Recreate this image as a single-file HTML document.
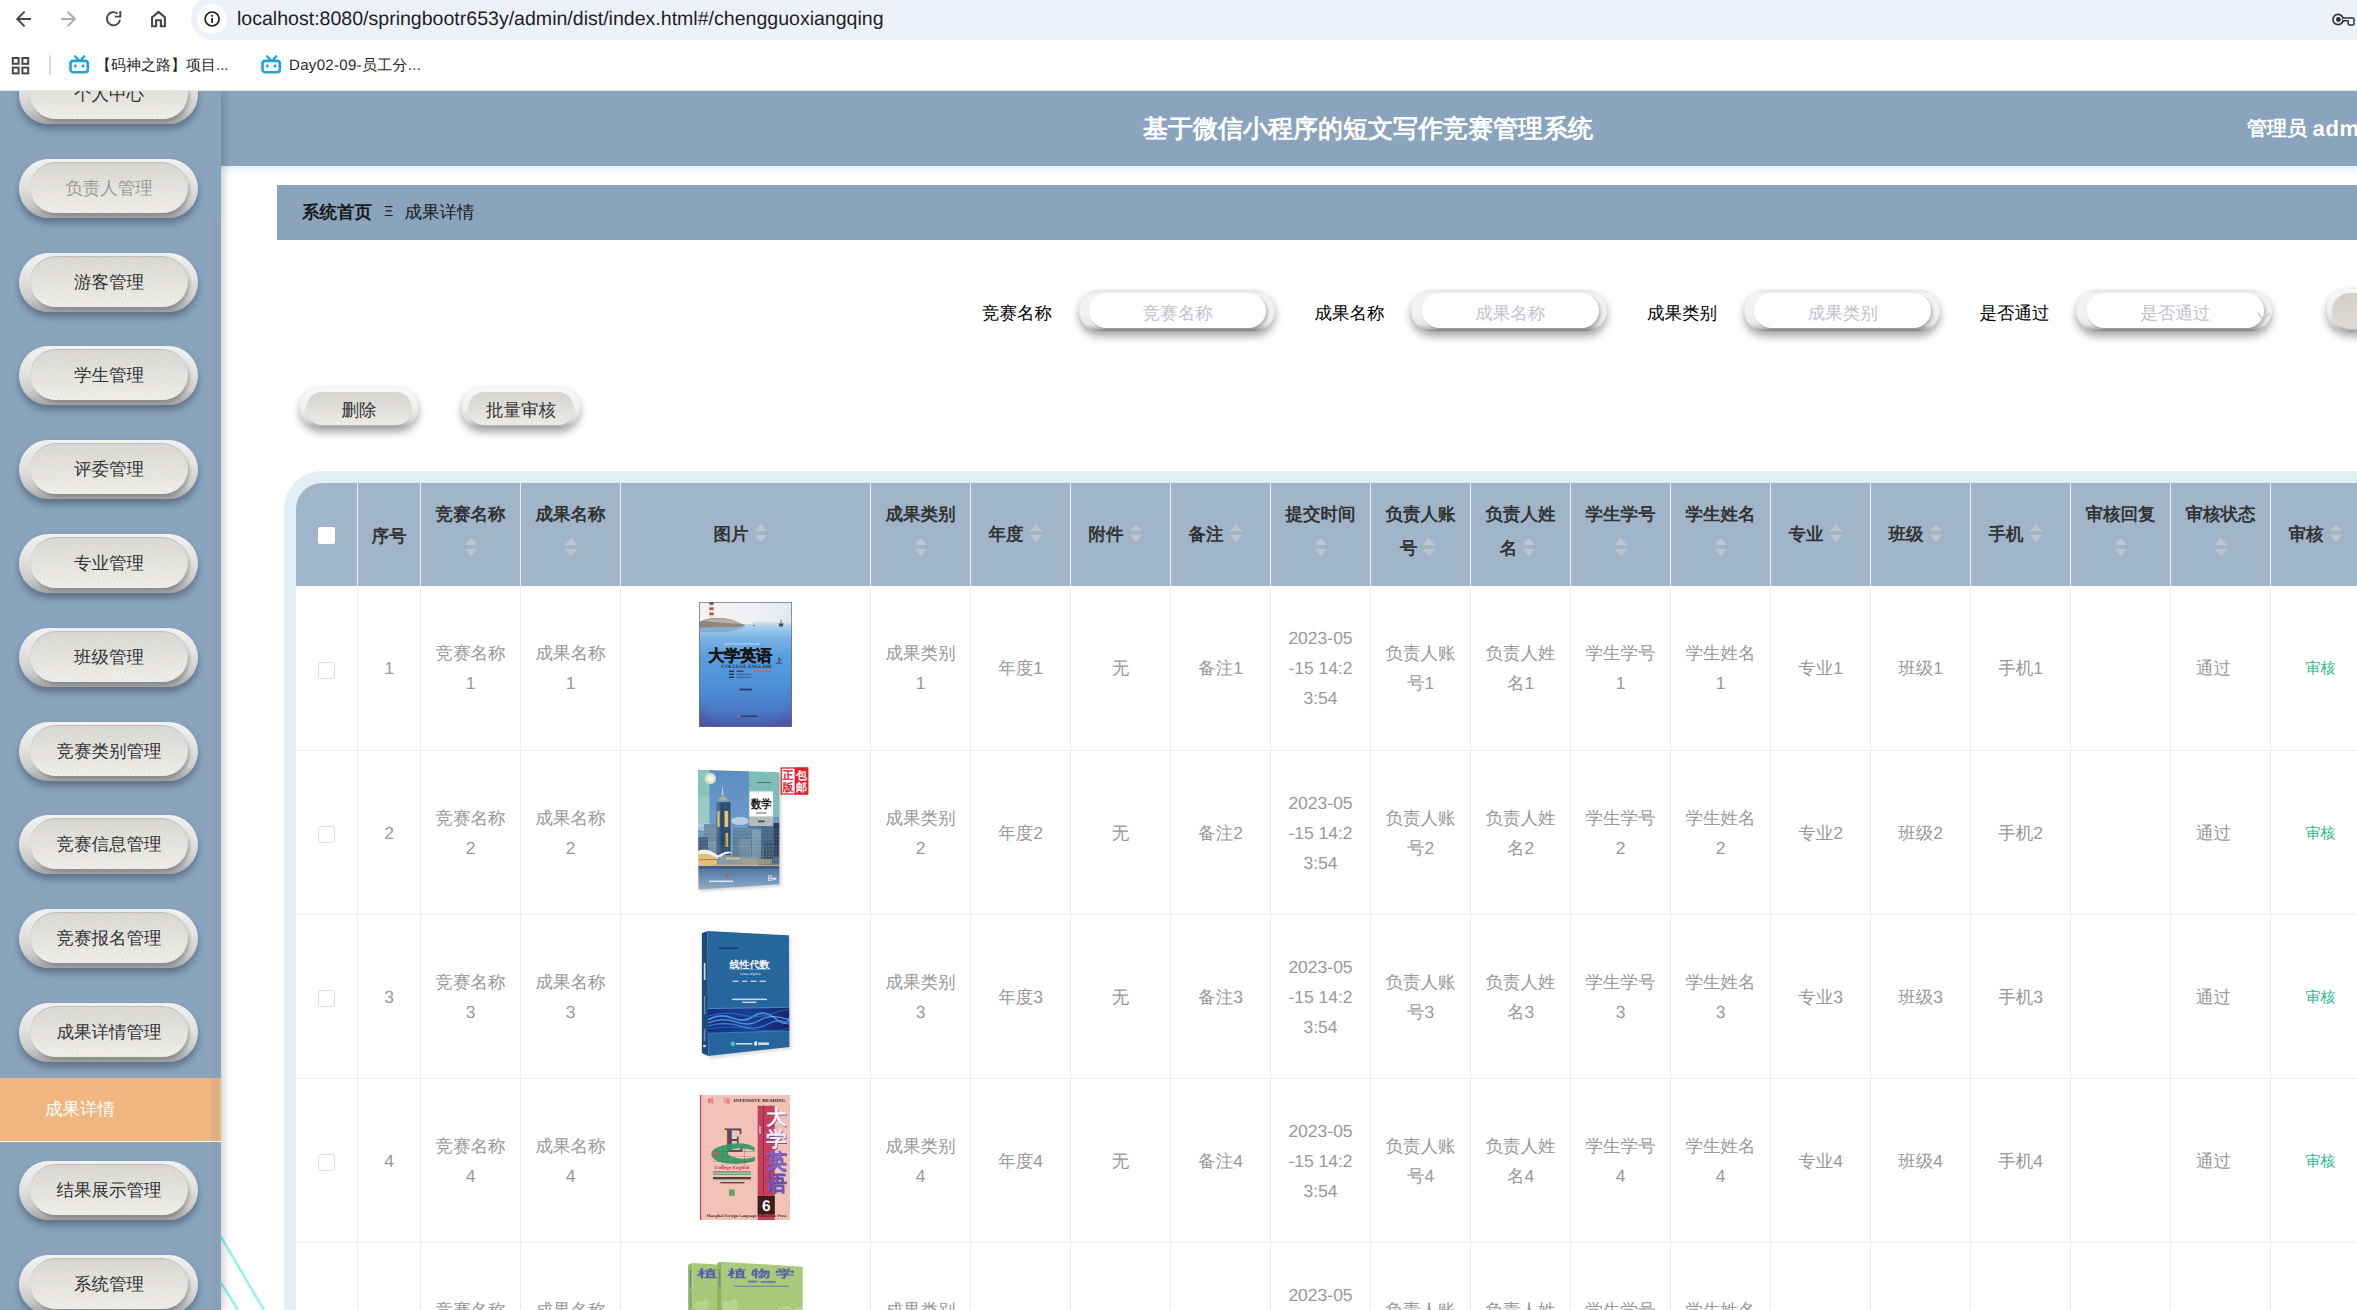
<!DOCTYPE html><html lang="zh"><head><meta charset="utf-8"><title>page</title><style>*{box-sizing:border-box;margin:0;padding:0}
html,body{width:2357px;height:1310px;overflow:hidden;background:#fff;font-family:"Liberation Sans",sans-serif;text-rendering:geometricPrecision;}
body{position:relative}
/* browser chrome */
#chrome{position:absolute;left:0;top:0;width:2357px;height:91px;background:#fff;z-index:50;border-bottom:1px solid #e9e8e5}
#chrome .url{position:absolute;left:191px;top:-4px;width:2300px;height:44px;border-radius:22px;background:#edf1fa}
#chrome .info{position:absolute;left:197px;top:4px;width:30px;height:30px;border-radius:15px;background:#fff}
#chrome .urlt{position:absolute;left:237px;top:7px;font-size:19.56px;line-height:24px;color:#1f1f1f;white-space:nowrap;letter-spacing:0px}
#chrome svg{position:absolute}
#chrome .bm{position:absolute;top:55.7px;font-size:15px;line-height:20px;color:#1f1f1f;white-space:nowrap}
#chrome .vsep{position:absolute;left:48.5px;top:55px;width:2.2px;height:20px;background:#d0defa;border-radius:1px}
/* app */
#app{position:absolute;left:0;top:90px;width:2357px;height:1220px;overflow:hidden;background:#fff}
.deco{position:absolute;left:221px;top:1130px}
.side{position:absolute;left:0;top:0;width:221px;height:1220px;background:#8aa4be;box-shadow:0 0 11px rgba(0,0,0,.3);overflow:hidden}
.sthumb{position:absolute;left:211px;top:128px;width:8.3px;height:1100px;background:rgba(140,140,150,.17);z-index:5;border-radius:4px 4px 0 0}
.mbtn{position:absolute;left:19px;width:179px;height:59px;border-radius:30px;
 background:linear-gradient(180deg,#f1f1f1 0%,#e4e4e4 40%,#cdcdcd 76%,#a2a2a2 100%);
 box-shadow:0 5px 7px rgba(40,50,70,.45)}
.mbtn .face{position:absolute;left:11px;top:3px;width:158px;height:51px;border-radius:26px;
 background:repeating-linear-gradient(104deg,rgba(240,205,115,0) 0,rgba(240,205,115,0) 3.1px,rgba(240,205,115,.36) 3.6px,rgba(240,205,115,0) 4.1px),linear-gradient(180deg,#d7d7d7 0%,#e3e3e3 50%,#eeeeee 100%);
 box-shadow:2px 3px 3px rgba(0,0,0,.2), inset 0 1px 1px rgba(160,160,160,.45);
 font-size:17.5px;line-height:52.4px;text-align:center;color:#333;white-space:nowrap}
.mbtn .face.dis{color:#9a9a9a}
.active{position:absolute;left:0;top:988px;width:221px;height:64px;background:#f0b680;border-bottom:1.5px solid #fff;color:#fff;font-size:17.5px;line-height:63px;padding-left:45px}
.hdr{position:absolute;left:221px;top:1px;width:2294px;height:75px;background:#8aa4be}
.hdr .title{position:absolute;left:0;top:0;width:100%;text-align:center;color:#fff;font-weight:bold;font-size:25px;line-height:76px;white-space:nowrap}
.hdr .user{position:absolute;left:2026px;top:0;color:#fff;font-weight:bold;font-size:20px;line-height:76px;white-space:nowrap}
.hshadow{position:absolute;left:221px;top:76px;width:2200px;height:8px;background:linear-gradient(180deg,rgba(222,234,250,.75),rgba(255,255,255,0))}
.bc{position:absolute;left:277px;top:95px;width:2200px;height:55px;background:#8aa4be;font-size:17.5px;line-height:55px;color:#1a1a1a;white-space:nowrap;padding-left:25px}
.bc b{font-weight:bold}
.bc .sep{position:absolute;left:107px;top:0;font-size:14.5px;color:#222}
.bc .cur{position:absolute;left:127.4px;top:0}
.flabel{position:absolute;top:208px;font-size:17.5px;line-height:30px;color:#000;white-space:nowrap}
.inp{position:absolute;top:200.3px;width:196px;height:40.7px;border-radius:21px;
 background:linear-gradient(180deg,#e9e9e9 0%,#f3f3f3 12%,#f1f1f1 60%,#e6e6e6 84%,#bdbdbd 94%,#8c8c8c 100%);
 box-shadow:0 5px 8px rgba(0,0,0,.36), inset 0 0 0 .6px rgba(0,0,0,.06)}
.inp .inpf{position:absolute;left:10.7px;top:2.5px;width:176.7px;height:35.7px;border-radius:18px;background:#fff;
 box-shadow:2px 2px 3px rgba(0,0,0,.22);
 font-size:17.5px;line-height:40px;text-align:center;color:#c0c4cc;white-space:nowrap}
.selarr{position:absolute;left:181px;top:22px}
.btn{position:absolute;border-radius:22px;background:linear-gradient(180deg,#f8f8f8 0%,#f0f0f0 50%,#d6d6d6 82%,#a4a4a4 100%);box-shadow:0 4px 8px rgba(0,0,0,.36)}
.btn .face{position:absolute;border-radius:18px;
 background:repeating-linear-gradient(104deg,rgba(240,205,115,0) 0,rgba(240,205,115,0) 3.1px,rgba(240,205,115,.36) 3.6px,rgba(240,205,115,0) 4.1px),linear-gradient(180deg,#d4d4d4 0%,#e0e0e0 50%,#ececec 100%);
 font-size:17.5px;line-height:36px;text-align:center;color:#333;white-space:nowrap}
.twrap{position:absolute;left:284px;top:381px;width:2200px;height:900px;background:#e2eff5;border-radius:38px 0 0 0;padding:12px 0 0 12px}
.tbl{width:2200px;height:900px;border-radius:26px 0 0 0;overflow:hidden;background:#fff}
.thead{display:flex;height:103px;background:#a0b5ca}
.th{flex:none;height:103px;border-right:1px solid #edf0f3;display:flex;align-items:center;justify-content:center;position:relative}
.th .cell{font-size:17.5px;font-weight:bold;color:#333;line-height:34px;text-align:center;white-space:nowrap;padding:0 0 0 0}
.caret{display:inline-block;position:relative;width:24px;height:34px;vertical-align:middle;margin-top:-4px}
.caret i{position:absolute;left:6px;width:0;height:0;border:6px solid transparent}
.caret .up{border-bottom:7px solid #c0c4cc;border-top:0;top:8px}
.caret .dn{border-top:7px solid #c0c4cc;border-bottom:0;top:19px}
.cbh{display:block;width:16.5px;height:16.5px;background:#fff;border-radius:2px;position:relative;top:1px}
.th .two{position:relative;top:-3.4px}
.th .one{position:relative;top:-1px}
.th .one .caret{margin-right:5px}
.tr{display:flex;height:164px}
.tr+.tr{border-top:1px solid #eeeeee}
.td{flex:none;height:100%;border-right:1px solid #eeeeee;display:flex;align-items:center;justify-content:center}
.td .cell{font-size:17.5px;color:#999;line-height:30px;text-align:center;white-space:nowrap}
.cb{display:block;width:17px;height:17px;border:1px solid #dcdfe6;border-radius:3px;background:#fff;margin-top:4px}
.lnk{font-size:15px;color:#1fb98b}
.pass{position:relative;left:-7px}
.imgtd{position:relative}
.cover{position:absolute;display:block}
</style></head><body>
<div id="chrome">
<div class="url"></div><div class="info"></div>
<svg style="left:14px;top:8.5px" width="20" height="20" viewBox="0 0 20 20"><path d="M17 10 H3.6 M10.6 2.6 L3.2 10 L10.6 17.4" fill="none" stroke="#474747" stroke-width="1.9" stroke-linecap="butt" stroke-linejoin="miter"/></svg>
<svg style="left:58px;top:8.5px" width="20" height="20" viewBox="0 0 20 20"><path d="M3.1 10 H16.5 M9.5 2.6 L16.9 10 L9.5 17.4" fill="none" stroke="#a9a9a9" stroke-width="1.9" stroke-linecap="butt" stroke-linejoin="miter"/></svg>
<svg style="left:103px;top:7.6px" width="22" height="22" viewBox="0 0 22 22"><path d="M17 11.6 A6.6 6.6 0 1 1 14.6 5.6" fill="none" stroke="#474747" stroke-width="1.9" stroke-linecap="butt"/><path d="M17.3 3 V8.6 H11.8" fill="none" stroke="#474747" stroke-width="1.9" stroke-linejoin="miter" stroke-linecap="butt"/></svg>
<svg style="left:148px;top:7.6px" width="22" height="22" viewBox="0 0 22 22"><path d="M4.1 9.3 L10.5 3.9 L16.9 9.3 V18.3 H12.9 V12.3 H8.1 V18.3 H4.1 Z" fill="none" stroke="#474747" stroke-width="2.1" stroke-linejoin="miter"/></svg>
<svg style="left:201px;top:8px" width="22" height="22" viewBox="0 0 22 22"><circle cx="11.1" cy="11" r="7" fill="none" stroke="#1f1f1f" stroke-width="1.7"/><rect x="10.2" y="10" width="1.8" height="4.8" fill="#1f1f1f"/><rect x="10.2" y="6.8" width="1.8" height="1.9" fill="#1f1f1f"/></svg>
<div class="urlt">localhost:8080/springbootr653y/admin/dist/index.html#/chengguoxiangqing</div>
<svg style="left:2330px;top:11px" width="28" height="18" viewBox="0 0 28 18"><circle cx="8.1" cy="8.5" r="5.15" fill="none" stroke="#333" stroke-width="1.6"/><circle cx="8.4" cy="8.5" r="2.4" fill="#333"/><path d="M13 6.9 H22.6 Q24 6.9 24 8.3 V12.7 Q24 14.1 22.6 14.1 H19.6 Q18.2 14.1 18.2 12.7 V9.8 H13" fill="#edf1fa" stroke="#333" stroke-width="1.5" stroke-linejoin="round"/></svg>
<svg style="left:11px;top:56px" width="20" height="20" viewBox="0 0 20 20"><g fill="none" stroke="#474747" stroke-width="2"><rect x="1.8" y="2" width="5.8" height="5.8"/><rect x="11.4" y="2" width="5.8" height="5.8"/><rect x="1.8" y="11.6" width="5.8" height="5.8"/><rect x="11.4" y="11.6" width="5.8" height="5.8"/></g></svg>
<div class="vsep"></div>
<svg style="left:67px;top:54px" width="24" height="22" viewBox="0 0 24 22"><g fill="none" stroke="#1aa3dc" stroke-width="2.6" stroke-linecap="round" stroke-linejoin="round"><rect x="3.5" y="6.9" width="17.3" height="11.3" rx="2.8"/><path d="M8 2.2 L11.6 6 M17.3 2.2 L13.8 6" stroke-width="2.2"/><path d="M8.4 10.5 V13.6 M16 10.5 V13.6" stroke-width="2.4" stroke-linecap="butt"/></g></svg>
<div class="bm" style="left:96px">【码神之路】项目...</div>
<svg style="left:259px;top:54px" width="24" height="22" viewBox="0 0 24 22"><g fill="none" stroke="#1aa3dc" stroke-width="2.6" stroke-linecap="round" stroke-linejoin="round"><rect x="3.5" y="6.9" width="17.3" height="11.3" rx="2.8"/><path d="M8 2.2 L11.6 6 M17.3 2.2 L13.8 6" stroke-width="2.2"/><path d="M8.4 10.5 V13.6 M16 10.5 V13.6" stroke-width="2.4" stroke-linecap="butt"/></g></svg>
<div class="bm" style="left:289px;letter-spacing:.32px">Day02-09-员工分...</div>
</div>

<div id="app">
<svg class="deco" width="80" height="90" viewBox="0 0 80 90"><path d="M0 17 L43 90" stroke="#8ff5ee" stroke-width="2.5" fill="none"/><path d="M0 63 L17 90" stroke="#8ff5ee" stroke-width="2.5" fill="none"/></svg>
<div class="hdr"><div class="title">基于微信小程序的短文写作竞赛管理系统</div><div class="user">管理员</div><div class="user" style="left:2091.6px;font-size:22px;letter-spacing:.6px">admin</div></div>
<div class="hshadow"></div>
<div class="bc"><b>系统首页</b><span class="sep">Ξ</span><span class="cur">成果详情</span></div>
<div class="flabel" style="left:982.0px">竞赛名称</div>
<div class="inp" style="left:1078.8px"><div class="inpf">竞赛名称</div></div>
<div class="flabel" style="left:1314.5px">成果名称</div>
<div class="inp" style="left:1411.3px"><div class="inpf">成果名称</div></div>
<div class="flabel" style="left:1647.0px">成果类别</div>
<div class="inp" style="left:1743.8px"><div class="inpf">成果类别</div></div>
<div class="flabel" style="left:1979.5px">是否通过</div>
<div class="inp" style="left:2076.3px"><div class="inpf">是否通过</div><svg class="selarr" width="14" height="9" viewBox="0 0 14 9"><path d="M1 1 L6 7.5 L13 1" fill="none" stroke="#c0c4cc" stroke-width="1.3"/></svg></div>
<div class="btn qbtn" style="left:2327px;top:199px;width:120px;height:43px"><div class="face" style="left:5px;top:4px;width:108px;height:36px;background:linear-gradient(180deg,#d2cfc8,#dedbd4)"></div></div>
<div class="btn" style="left:300px;top:298px;width:118px;height:40px"><div class="face" style="left:6px;top:4px;width:106px;height:33px">删除</div></div>
<div class="btn" style="left:462px;top:298px;width:118px;height:40px"><div class="face" style="left:6px;top:4px;width:106px;height:33px">批量审核</div></div>
<div class="twrap"><div class="tbl">
<div class="thead">
<div class="th" style="width:62px"><span class="cbh"></span></div>
<div class="th" style="width:63px"><div class="cell" style="position:relative;top:1px">序号</div></div>
<div class="th" style="width:100px"><div class="cell two">竞赛名称<br><span class="caret"><i class="up"></i><i class="dn"></i></span></div></div>
<div class="th" style="width:100px"><div class="cell two">成果名称<br><span class="caret"><i class="up"></i><i class="dn"></i></span></div></div>
<div class="th" style="width:250px"><div class="cell one">图片<span class="caret"><i class="up"></i><i class="dn"></i></span></div></div>
<div class="th" style="width:100px"><div class="cell two">成果类别<br><span class="caret"><i class="up"></i><i class="dn"></i></span></div></div>
<div class="th" style="width:100px"><div class="cell one">年度<span class="caret"><i class="up"></i><i class="dn"></i></span></div></div>
<div class="th" style="width:100px"><div class="cell one">附件<span class="caret"><i class="up"></i><i class="dn"></i></span></div></div>
<div class="th" style="width:100px"><div class="cell one">备注<span class="caret"><i class="up"></i><i class="dn"></i></span></div></div>
<div class="th" style="width:100px"><div class="cell two">提交时间<br><span class="caret"><i class="up"></i><i class="dn"></i></span></div></div>
<div class="th" style="width:100px"><div class="cell two">负责人账<br>号<span class="caret"><i class="up"></i><i class="dn"></i></span></div></div>
<div class="th" style="width:100px"><div class="cell two">负责人姓<br>名<span class="caret"><i class="up"></i><i class="dn"></i></span></div></div>
<div class="th" style="width:100px"><div class="cell two">学生学号<br><span class="caret"><i class="up"></i><i class="dn"></i></span></div></div>
<div class="th" style="width:100px"><div class="cell two">学生姓名<br><span class="caret"><i class="up"></i><i class="dn"></i></span></div></div>
<div class="th" style="width:100px"><div class="cell one">专业<span class="caret"><i class="up"></i><i class="dn"></i></span></div></div>
<div class="th" style="width:100px"><div class="cell one">班级<span class="caret"><i class="up"></i><i class="dn"></i></span></div></div>
<div class="th" style="width:100px"><div class="cell one">手机<span class="caret"><i class="up"></i><i class="dn"></i></span></div></div>
<div class="th" style="width:100px"><div class="cell two">审核回复<br><span class="caret"><i class="up"></i><i class="dn"></i></span></div></div>
<div class="th" style="width:100px"><div class="cell two">审核状态<br><span class="caret"><i class="up"></i><i class="dn"></i></span></div></div>
<div class="th" style="width:100px"><div class="cell one">审核<span class="caret"><i class="up"></i><i class="dn"></i></span></div></div>
</div>
<div class="tr">
<div class="td" style="width:62px"><span class="cb"></span></div>
<div class="td" style="width:63px"><div class="cell">1</div></div>
<div class="td" style="width:100px"><div class="cell">竞赛名称<br>1</div></div>
<div class="td" style="width:100px"><div class="cell">成果名称<br>1</div></div>
<div class="td imgtd" style="width:250px"><svg class="cover" style="left:78px;top:16.3px" width="93" height="125" viewBox="0 0 93 125">
<defs>
<linearGradient id="c1w" x1="0" y1="0" x2="0" y2="1"><stop offset="0" stop-color="#b9d6ee"/><stop offset=".12" stop-color="#7db5e6"/><stop offset=".3" stop-color="#5a9fde"/><stop offset=".6" stop-color="#4e8fd6"/><stop offset=".85" stop-color="#4a78c4"/><stop offset="1" stop-color="#4a5aa8"/></linearGradient>
<linearGradient id="c1s" x1="0" y1="0" x2="1" y2="0"><stop offset="0" stop-color="#f7f3f4"/><stop offset=".6" stop-color="#f1eff4"/><stop offset="1" stop-color="#dfe9f4"/></linearGradient>
<radialGradient id="c1p" cx=".5" cy=".35" r=".85"><stop offset="0" stop-color="#5c3f90" stop-opacity="0"/><stop offset=".72" stop-color="#5c3f90" stop-opacity="0"/><stop offset="1" stop-color="#5c3f90" stop-opacity=".6"/></radialGradient>
<filter id="b1"><feGaussianBlur stdDeviation=".45"/></filter>
</defs>
<rect width="93" height="125" fill="url(#c1s)"/>
<g filter="url(#b1)">
<rect x="0" y="22" width="93" height="103" fill="url(#c1w)"/>
<rect x="0" y="22" width="93" height="103" fill="url(#c1p)"/>
<path d="M52 21 Q60 18.5 70 20.5 Q80 19 93 20.5 V23 H52 Z" fill="#c9d8ea" opacity=".8"/>
<rect x="10.4" y="0" width="4.2" height="17" fill="#e9e2e0"/>
<rect x="10.4" y="0" width="4.2" height="2.6" fill="#5a4a48"/>
<rect x="10.4" y="5.4" width="4.2" height="2.6" fill="#b4553f"/>
<rect x="10.4" y="10.6" width="4.2" height="2.6" fill="#b4553f"/>
<path d="M0 20 L6 17.5 L14 16 L24 16 L34 18 L42 21.5 L47 24 L40 25 L0 25.5 Z" fill="#8d877c"/>
<path d="M4 19 L14 16.4 L24 16.4 L34 18.4 L42 22 L20 20.5 Z" fill="#c2bcb0" opacity=".8"/>
<path d="M0 25 H46 L30 30 H0 Z" fill="#6d8fb4" opacity=".45"/>
<path d="M79.5 21.5 H84.5 L83.6 24.4 H80.4 Z" fill="#3c4656"/><rect x="81.7" y="17.6" width=".7" height="4" fill="#3c4656"/>
<rect x="54" y="23" width="2" height="1.1" fill="#8a6a58"/>
</g>
<text x="41.2" y="59.2" font-family="'Liberation Sans',sans-serif" font-weight="bold" font-size="16" fill="#161616" stroke="#161616" stroke-width=".45" text-anchor="middle" textLength="64" lengthAdjust="spacingAndGlyphs">大学英语</text>
<text x="80" y="60.6" font-family="'Liberation Serif',serif" font-weight="bold" font-size="7" fill="#1f3560" text-anchor="middle">上</text>
<text x="47.3" y="66.3" font-family="'Liberation Serif',serif" font-weight="bold" font-size="5.1" fill="#1c2a48" text-anchor="middle" textLength="50" lengthAdjust="spacingAndGlyphs">COLLEGE ENGLISH</text>
<g filter="url(#b1)">
<rect x="25" y="41.4" width="36" height="1.1" fill="#cfe0f2" opacity=".75"/>
<rect x="30" y="68.6" width="5" height="1.3" fill="#1c2a48"/><rect x="37.5" y="68.6" width="7" height="1.3" fill="#1c2a48" opacity=".8"/><rect x="55" y="68.4" width="16.5" height="1.6" fill="#d9682e"/>
<rect x="30" y="71.6" width="5" height="1.3" fill="#1c2a48"/><rect x="37.5" y="71.8" width="15" height=".9" fill="#2c3c60" opacity=".7"/>
<rect x="30" y="74.6" width="5" height="1.3" fill="#1c2a48"/><rect x="37.5" y="74.8" width="15" height=".9" fill="#2c3c60" opacity=".7"/>
<rect x="40.5" y="86.6" width="12.5" height="1.9" fill="#1f2f55" opacity=".85"/>
<circle cx="40" cy="114.2" r="1" fill="#d9682e"/><rect x="42" y="113.5" width="16.5" height="1.5" fill="#24345c" opacity=".85"/>
</g>
<rect x=".35" y=".35" width="92.3" height="124.3" fill="none" stroke="#6a6a78" stroke-width=".7"/>
</svg>
</div>
<div class="td" style="width:100px"><div class="cell">成果类别<br>1</div></div>
<div class="td" style="width:100px"><div class="cell">年度1</div></div>
<div class="td" style="width:100px"><div class="cell">无</div></div>
<div class="td" style="width:100px"><div class="cell">备注1</div></div>
<div class="td" style="width:100px"><div class="cell">2023-05<br>-15 14:2<br>3:54</div></div>
<div class="td" style="width:100px"><div class="cell">负责人账<br>号1</div></div>
<div class="td" style="width:100px"><div class="cell">负责人姓<br>名1</div></div>
<div class="td" style="width:100px"><div class="cell">学生学号<br>1</div></div>
<div class="td" style="width:100px"><div class="cell">学生姓名<br>1</div></div>
<div class="td" style="width:100px"><div class="cell">专业1</div></div>
<div class="td" style="width:100px"><div class="cell">班级1</div></div>
<div class="td" style="width:100px"><div class="cell">手机1</div></div>
<div class="td" style="width:100px"><div class="cell"></div></div>
<div class="td" style="width:100px"><div class="cell"><span class="pass">通过</span></div></div>
<div class="td" style="width:100px"><div class="cell"><span class="lnk">审核</span></div></div>
</div>
<div class="tr">
<div class="td" style="width:62px"><span class="cb"></span></div>
<div class="td" style="width:63px"><div class="cell">2</div></div>
<div class="td" style="width:100px"><div class="cell">竞赛名称<br>2</div></div>
<div class="td" style="width:100px"><div class="cell">成果名称<br>2</div></div>
<div class="td imgtd" style="width:250px">
<svg class="cover" style="left:61px;top:16px" width="127" height="126" viewBox="0 0 127 126">
<defs>
<linearGradient id="c2sky" x1="0" y1="0" x2="0" y2="1"><stop offset="0" stop-color="#5b8cc4"/><stop offset=".55" stop-color="#6f9dcc"/><stop offset="1" stop-color="#a9c6de"/></linearGradient>
<linearGradient id="c2wat" x1="0" y1="0" x2="0" y2="1"><stop offset="0" stop-color="#4f6f98"/><stop offset=".45" stop-color="#6d8fb6"/><stop offset="1" stop-color="#9db6cc"/></linearGradient>
<linearGradient id="c2tw" x1="0" y1="0" x2="1" y2="0"><stop offset="0" stop-color="#4b7296"/><stop offset=".5" stop-color="#35597c"/><stop offset="1" stop-color="#2b4a6a"/></linearGradient>
<clipPath id="c2clip"><path d="M15.9 2.8 L97.3 5.3 L97.3 117.2 L16.4 122.4 Z"/></clipPath>
<filter id="b2"><feGaussianBlur stdDeviation=".6"/></filter>
<pattern id="c2sp" width="3.2" height="2.6" patternUnits="userSpaceOnUse"><rect x=".4" y=".5" width="1.3" height=".8" fill="#f3e3b4" opacity=".5"/></pattern>
<pattern id="c2sp2" width="2.4" height="3.4" patternUnits="userSpaceOnUse"><rect x=".3" y=".4" width=".8" height="1.6" fill="#dfeaf2" opacity=".35"/></pattern>
<linearGradient id="c2dk" x1="0" y1="0" x2="0" y2="1"><stop offset="0" stop-color="#1c2c44" stop-opacity="0"/><stop offset="1" stop-color="#1c2c44" stop-opacity=".28"/></linearGradient>
<filter id="b2s"><feGaussianBlur stdDeviation="1.6"/></filter>
</defs>
<path d="M17.5 6 L99 8 L99 119 L18 124.5 Z" fill="#7a8088" opacity=".35" filter="url(#b2s)"/>
<g clip-path="url(#c2clip)"><g filter="url(#b2)">
<rect x="10" y="0" width="95" height="126" fill="url(#c2sky)"/>
<rect x="66.9" y="0" width="35" height="50" fill="#7ebdb8"/>
<rect x="14" y="0" width="13.4" height="58" fill="#8cc4ba"/>
<rect x="14" y="30" width="13.4" height="30" fill="#9fcfc6" opacity=".7"/>
<ellipse cx="58" cy="54" rx="9" ry="4" fill="#c9dcea" opacity=".8"/><ellipse cx="24" cy="60" rx="10" ry="4" fill="#bcd2e2" opacity=".7"/>
<circle cx="28.3" cy="11.5" r="5.7" fill="#d4e3c6"/><circle cx="28.3" cy="11.5" r="3.2" fill="#f2f6ea"/>
<!-- right city block -->
<rect x="66" y="58" width="32" height="42" fill="#55799a"/>
<rect x="91.5" y="56" width="7" height="34" fill="#2c3f5c"/>
<rect x="51" y="61" width="25" height="38" fill="#5d86a4"/>
<rect x="70" y="63" width="10" height="30" fill="#8fb0c4" opacity=".7"/>
<rect x="57" y="72" width="12" height="26" fill="#7e9cb2" opacity=".8"/>
<rect x="79" y="60" width="12" height="36" fill="#47688a"/>
<rect x="82" y="76" width="9" height="22" fill="#3a5676"/>
<!-- left low buildings -->
<rect x="22" y="57" width="14" height="36" fill="#6f8ea6"/>
<rect x="16" y="70" width="10" height="24" fill="#4a6486"/>
<rect x="26" y="74" width="10" height="20" fill="#8ca6b8" opacity=".8"/>
<!-- tower -->
<path d="M40.5 17.5 L41.4 28 L39.6 28 Z" fill="#c8d6e2"/>
<path d="M34.8 36 Q41 20 48 36 Z" fill="#7f9fb4"/>
<path d="M37 33 Q41 25 45.6 33 Z" fill="#c9b87a" opacity=".6"/>
<rect x="34.4" y="35" width="14" height="53" fill="url(#c2tw)"/>
<rect x="35.4" y="44" width="2.2" height="16" fill="#e6bf62"/>
<rect x="42.6" y="44" width="3.6" height="16" fill="#e9c76c"/>
<rect x="43.6" y="66" width="2.6" height="14" fill="#e2b85a"/>
<rect x="38.6" y="36" width="3" height="51" fill="#26425f" opacity=".7"/>
<rect x="49" y="62" width="49" height="37" fill="url(#c2sp2)"/><rect x="16" y="60" width="20" height="34" fill="url(#c2sp2)"/><rect x="36" y="78" width="62" height="20" fill="url(#c2sp)"/><rect x="14" y="58" width="86" height="42" fill="url(#c2dk)"/>
<!-- convention centre -->
<path d="M15 86 Q22 80 35 88 L35 100 L15 100 Z" fill="#e4bf74"/>
<path d="M15 84.5 Q24 79 36 88.5 Q46 82 50 86 Q42 86 36 92 Q26 84 15 88 Z" fill="#eef2f4"/>
<rect x="15" y="92" width="22" height="1.2" fill="#8a7a5a" opacity=".7"/>
<rect x="36" y="90" width="40" height="9" fill="#8a9aa8"/>
<rect x="44" y="90.5" width="14" height="2" fill="#e6c070" opacity=".9"/>
<rect x="60" y="92" width="30" height="5" fill="#a9a08a" opacity=".8"/>
<rect x="14" y="97.5" width="86" height="2" fill="#c9b890" opacity=".8"/>
<!-- water -->
<rect x="10" y="99" width="92" height="27" fill="url(#c2wat)"/>
<rect x="14" y="99.5" width="86" height="2.2" fill="#34486a" opacity=".6"/>
<rect x="27" y="113.5" width="24" height="1.6" fill="#e8eef4" opacity=".85"/>
<path d="M44 107.5 L47 107.5 L46.4 109.3 L44.6 109.3 Z" fill="#c05040"/>
</g>
<rect x="67.4" y="24.4" width="23.7" height="25.3" fill="#fbfbfb"/>
<rect x="67.4" y="49.7" width="23.7" height="9.3" fill="#b9babc"/>
<text transform="translate(79.3,40.6) scale(1,1.14)" x="0" y="0" font-family="'Liberation Serif',serif" font-weight="bold" font-size="10.4" fill="#1a1a1a" text-anchor="middle">数学</text>
<rect x="74" y="45.4" width="10.6" height="1.1" fill="#555" opacity=".8"/>
<rect x="76" y="53.6" width="6.6" height="1.6" fill="#333" opacity=".85"/>
<rect x="75" y="15" width="14" height="1" fill="#3d5f5c" opacity=".8"/>
<text x="85.5" y="113.6" font-family="'Liberation Sans',sans-serif" font-size="8" fill="#f4f6f8">B</text>
<rect x="91" y="110.6" width="3.2" height="2.2" fill="#f4f6f8" opacity=".85"/>
</g>
<!-- stamp -->
<g>
<rect x="99.2" y="1" width="26.4" height="26" fill="#fff" stroke="#e3202b" stroke-width="1.3"/>
<rect x="112.6" y=".6" width="13.6" height="26.8" fill="#e3202b"/>
<text x="119.4" y="12.2" font-family="'Liberation Serif',serif" font-weight="bold" font-size="11" fill="#fff" text-anchor="middle">包</text>
<text x="119.4" y="24.4" font-family="'Liberation Serif',serif" font-weight="bold" font-size="11" fill="#fff" text-anchor="middle">邮</text>
<text x="106" y="12.2" font-family="'Liberation Serif',serif" font-weight="bold" font-size="11" fill="#e3202b" text-anchor="middle">正</text>
<text x="106" y="24.4" font-family="'Liberation Serif',serif" font-weight="bold" font-size="11" fill="#e3202b" text-anchor="middle">版</text>
</g>
</svg>
</div>
<div class="td" style="width:100px"><div class="cell">成果类别<br>2</div></div>
<div class="td" style="width:100px"><div class="cell">年度2</div></div>
<div class="td" style="width:100px"><div class="cell">无</div></div>
<div class="td" style="width:100px"><div class="cell">备注2</div></div>
<div class="td" style="width:100px"><div class="cell">2023-05<br>-15 14:2<br>3:54</div></div>
<div class="td" style="width:100px"><div class="cell">负责人账<br>号2</div></div>
<div class="td" style="width:100px"><div class="cell">负责人姓<br>名2</div></div>
<div class="td" style="width:100px"><div class="cell">学生学号<br>2</div></div>
<div class="td" style="width:100px"><div class="cell">学生姓名<br>2</div></div>
<div class="td" style="width:100px"><div class="cell">专业2</div></div>
<div class="td" style="width:100px"><div class="cell">班级2</div></div>
<div class="td" style="width:100px"><div class="cell">手机2</div></div>
<div class="td" style="width:100px"><div class="cell"></div></div>
<div class="td" style="width:100px"><div class="cell"><span class="pass">通过</span></div></div>
<div class="td" style="width:100px"><div class="cell"><span class="lnk">审核</span></div></div>
</div>
<div class="tr">
<div class="td" style="width:62px"><span class="cb"></span></div>
<div class="td" style="width:63px"><div class="cell">3</div></div>
<div class="td" style="width:100px"><div class="cell">竞赛名称<br>3</div></div>
<div class="td" style="width:100px"><div class="cell">成果名称<br>3</div></div>
<div class="td imgtd" style="width:250px">
<svg class="cover" style="left:69px;top:8px" width="110" height="140" viewBox="0 0 110 140">
<defs>
<linearGradient id="c3band" x1="0" y1="0" x2="1" y2="0"><stop offset="0" stop-color="#16307a"/><stop offset=".5" stop-color="#1a3f92"/><stop offset="1" stop-color="#13256a"/></linearGradient>
<clipPath id="c3clip"><path d="M17.6 8 L98.9 12.3 L99.4 124 L18.2 133.1 Z"/></clipPath>
<filter id="b3"><feGaussianBlur stdDeviation=".45"/></filter>
<filter id="b3s"><feGaussianBlur stdDeviation="1.5"/></filter>
</defs>
<path d="M14 13 L101 15 L101.5 126 L19 136 Z" fill="#8a9098" opacity=".3" filter="url(#b3s)"/>
<path d="M11.8 10.2 L17.6 8 L18.2 133.1 L11.8 129.9 Z" fill="#1d4c7c"/>
<path d="M17.6 8 L98.9 12.3 L99.4 124 L18.2 133.1 Z" fill="#27669d"/>
<g clip-path="url(#c3clip)" filter="url(#b3)">
<path d="M18 85.5 L99.4 84.2 L99.4 108 L18 110.4 Z" fill="url(#c3band)"/>
<path d="M18 85.6 L99.4 84.3" stroke="#6fb2ee" stroke-width=".6" fill="none"/>
<path d="M18 110.2 L99.4 107.9" stroke="#5aa0e6" stroke-width=".6" fill="none"/>
<path d="M18 97 Q30 90 42 95 T64 93 T86 96 T100 92" stroke="#4fa6f2" stroke-width="1.6" fill="none" opacity=".85"/>
<path d="M18 100 Q32 94 46 99 T70 97 T100 97" stroke="#8fd0ff" stroke-width="1" fill="none" opacity=".8"/>
<path d="M18 103 Q34 98 50 103 T78 101 T100 102" stroke="#3c8ee0" stroke-width="1.4" fill="none" opacity=".8"/>
<path d="M18 93 Q36 88 52 92 T84 90 T100 89" stroke="#2f78d0" stroke-width="1.2" fill="none" opacity=".7"/>
<path d="M18 106 Q40 102 60 106 T100 105" stroke="#2f78d0" stroke-width="1" fill="none" opacity=".6"/>
</g>
<text x="59.6" y="45" font-family="'Liberation Serif',serif" font-weight="bold" font-size="10" fill="#f4f8fc" text-anchor="middle" textLength="40" lengthAdjust="spacingAndGlyphs">线性代数</text>
<g filter="url(#b3)">
<rect x="39" y="46.4" width="42" height=".4" fill="#cfe0f0" opacity=".7"/>
<rect x="28.3" y="24.6" width="20.4" height="1.4" fill="#13325a" opacity=".75"/>
<text x="60.4" y="52.2" font-family="'Liberation Serif',serif" font-size="3.6" fill="#dbe8f4" text-anchor="middle" textLength="20.4" lengthAdjust="spacingAndGlyphs">Linear Algebra</text>
<rect x="42.6" y="57.6" width="6" height="1.4" fill="#dbe8f4" opacity=".8"/><rect x="52" y="57.6" width="5.4" height="1.4" fill="#dbe8f4" opacity=".8"/><rect x="60.6" y="57.6" width="6" height="1.4" fill="#dbe8f4" opacity=".8"/><rect x="69.6" y="57.6" width="6.4" height="1.4" fill="#dbe8f4" opacity=".8"/>
<rect x="42.2" y="75.6" width="34.8" height="1.5" fill="#e4eef8" opacity=".85"/>
<rect x="52.4" y="78.6" width="14" height="1.4" fill="#e4eef8" opacity=".85"/>
<circle cx="42.8" cy="120.8" r="2.2" fill="#46c6c2"/><rect x="46" y="120" width="16.4" height="1.6" fill="#e4eef8" opacity=".85"/>
<path d="M64.2 119 L67 118 L67 122.6 L64.2 122.6 Z" fill="#e8f0f8"/><rect x="68" y="119.4" width="11" height="2.6" fill="#e4eef8" opacity=".85"/>
<rect x="13.8" y="40" width="1.7" height="17" fill="#e4eef8" opacity=".85"/>
<rect x="14" y="73" width="1.2" height="18" fill="#9fb8d0" opacity=".6"/>
<rect x="13.8" y="106" width="1.6" height="12" fill="#9fb8d0" opacity=".6"/>
<rect x="13.2" y="122" width="2.6" height="2.2" fill="#e4eef8" opacity=".9"/>
</g>
</svg>
</div>
<div class="td" style="width:100px"><div class="cell">成果类别<br>3</div></div>
<div class="td" style="width:100px"><div class="cell">年度3</div></div>
<div class="td" style="width:100px"><div class="cell">无</div></div>
<div class="td" style="width:100px"><div class="cell">备注3</div></div>
<div class="td" style="width:100px"><div class="cell">2023-05<br>-15 14:2<br>3:54</div></div>
<div class="td" style="width:100px"><div class="cell">负责人账<br>号3</div></div>
<div class="td" style="width:100px"><div class="cell">负责人姓<br>名3</div></div>
<div class="td" style="width:100px"><div class="cell">学生学号<br>3</div></div>
<div class="td" style="width:100px"><div class="cell">学生姓名<br>3</div></div>
<div class="td" style="width:100px"><div class="cell">专业3</div></div>
<div class="td" style="width:100px"><div class="cell">班级3</div></div>
<div class="td" style="width:100px"><div class="cell">手机3</div></div>
<div class="td" style="width:100px"><div class="cell"></div></div>
<div class="td" style="width:100px"><div class="cell"><span class="pass">通过</span></div></div>
<div class="td" style="width:100px"><div class="cell"><span class="lnk">审核</span></div></div>
</div>
<div class="tr">
<div class="td" style="width:62px"><span class="cb"></span></div>
<div class="td" style="width:63px"><div class="cell">4</div></div>
<div class="td" style="width:100px"><div class="cell">竞赛名称<br>4</div></div>
<div class="td" style="width:100px"><div class="cell">成果名称<br>4</div></div>
<div class="td imgtd" style="width:250px">
<svg class="cover" style="left:79.4px;top:16px" width="90" height="125" viewBox="0 0 90 125">
<defs>
<linearGradient id="c4t" x1="0" y1="0" x2="0" y2="1"><stop offset="0" stop-color="#ffffff"/><stop offset=".35" stop-color="#f1ecfa"/><stop offset=".6" stop-color="#8a78d0"/><stop offset="1" stop-color="#5e50b4"/></linearGradient>
<filter id="b4"><feGaussianBlur stdDeviation=".45"/></filter>
</defs>
<rect width="90" height="125" fill="#f3c2b7"/>
<g filter="url(#b4)">
<rect x="0" y="0" width="1.2" height="125" fill="#c63e58"/>
<rect x="57.7" y="10.7" width="17" height="114.3" fill="#c5415c"/>
<rect x="63" y="10.7" width=".5" height="91" fill="#5a1c2c"/>
<rect x="57.7" y="101" width="17" height="18.4" fill="#3c1c1c"/>
<rect x="59.2" y="31" width="1.6" height="8" fill="#f0c8c8" opacity=".8"/>
</g>
<text x="66.2" y="116.4" font-family="'Liberation Sans',sans-serif" font-weight="bold" font-size="15.5" fill="#fbf6f0" text-anchor="middle">6</text>
<g font-family="'Liberation Serif',serif" font-weight="bold" font-size="20.5" text-anchor="middle">
<g fill="#5a4aa0" opacity=".9" transform="translate(.9,.9)"><text x="76.4" y="29.4">大</text><text x="76.4" y="51.2">学</text><text x="76.4" y="73.4">英</text><text x="76.4" y="94.8">语</text></g>
<text x="76.4" y="29.4" fill="#fdfbff">大</text><text x="76.4" y="51.2" fill="#f3eefc">学</text><text x="76.4" y="73.4" fill="#7a68c8">英</text><text x="76.4" y="94.8" fill="#6656ba">语</text>
</g>
<text transform="translate(34,57.2) scale(1,1.2)" font-family="'Liberation Serif',serif" font-weight="bold" font-size="30" fill="#5a4858" text-anchor="middle">E</text>
<g filter="url(#b4)">
<path d="M54.6 52.4 Q46 47 32 48.8 Q12 51.5 11.2 59 Q12 67.6 32 68.8 Q46 69.6 55 65.6 L55 62 Q44 64.8 36 62.8 Q27 60.6 28 57.4 Q30 53.4 42 53.6 Q50 54 54.6 56.2 Z" fill="#2f9a62" opacity=".92"/>
<circle cx="15.6" cy="58.6" r="2.6" fill="#c4605a" opacity=".85"/>
<rect x="12.6" y="56" width="42" height=".7" fill="#6a5a68" opacity=".55"/><rect x="12.6" y="66" width="42" height=".7" fill="#6a5a68" opacity=".55"/><rect x="12.6" y="61" width="42" height=".6" fill="#6a5a68" opacity=".4"/>
<rect x="22" y="50" width=".7" height="22" fill="#6a5a68" opacity=".45"/><rect x="44" y="50" width=".7" height="22" fill="#6a5a68" opacity=".45"/>
</g>
<text x="19" y="7.6" font-family="'Liberation Sans',sans-serif" font-size="6.4" fill="#cf3b50" text-anchor="middle" textLength="23" lengthAdjust="spacing">精 读</text>
<text x="59.6" y="7" font-family="'Liberation Serif',serif" font-weight="bold" font-size="4.6" fill="#2c1c24" text-anchor="middle" textLength="52" lengthAdjust="spacingAndGlyphs">INTENSIVE  READING</text>
<g filter="url(#b4)">
<text x="32" y="73.6" font-family="'Liberation Serif',serif" font-weight="bold" font-size="4.6" fill="#c03a4c" text-anchor="middle" textLength="35" lengthAdjust="spacingAndGlyphs">College English</text>
<rect x="13" y="76.2" width="38" height="1.4" fill="#5f9a6a"/><rect x="13" y="78.6" width="38" height="1.4" fill="#5f9a6a" opacity=".85"/>
<rect x="13" y="82" width="38" height="2.2" fill="#3a2c34" opacity=".85"/>
<rect x="13" y="84.6" width="38" height=".5" fill="#5f9a6a"/>
<rect x="20.4" y="87" width="24" height="1.4" fill="#3a2c34" opacity=".8"/>
<rect x="29" y="94.4" width="5.6" height="6.4" fill="#5aa468"/>
<text x="46.6" y="122.2" font-family="'Liberation Serif',serif" font-weight="bold" font-size="3.9" fill="#3a2428" text-anchor="middle" textLength="80" lengthAdjust="spacingAndGlyphs">Shanghai Foreign Language Education Press</text>
</g>
</svg>
</div>
<div class="td" style="width:100px"><div class="cell">成果类别<br>4</div></div>
<div class="td" style="width:100px"><div class="cell">年度4</div></div>
<div class="td" style="width:100px"><div class="cell">无</div></div>
<div class="td" style="width:100px"><div class="cell">备注4</div></div>
<div class="td" style="width:100px"><div class="cell">2023-05<br>-15 14:2<br>3:54</div></div>
<div class="td" style="width:100px"><div class="cell">负责人账<br>号4</div></div>
<div class="td" style="width:100px"><div class="cell">负责人姓<br>名4</div></div>
<div class="td" style="width:100px"><div class="cell">学生学号<br>4</div></div>
<div class="td" style="width:100px"><div class="cell">学生姓名<br>4</div></div>
<div class="td" style="width:100px"><div class="cell">专业4</div></div>
<div class="td" style="width:100px"><div class="cell">班级4</div></div>
<div class="td" style="width:100px"><div class="cell">手机4</div></div>
<div class="td" style="width:100px"><div class="cell"></div></div>
<div class="td" style="width:100px"><div class="cell"><span class="pass">通过</span></div></div>
<div class="td" style="width:100px"><div class="cell"><span class="lnk">审核</span></div></div>
</div>
<div class="tr">
<div class="td" style="width:62px"><span class="cb"></span></div>
<div class="td" style="width:63px"><div class="cell">5</div></div>
<div class="td" style="width:100px"><div class="cell">竞赛名称<br>5</div></div>
<div class="td" style="width:100px"><div class="cell">成果名称<br>5</div></div>
<div class="td imgtd" style="width:250px">
<svg class="cover" style="left:64px;top:12.4px" width="120" height="60" viewBox="0 0 120 60">
<defs><filter id="b5"><feGaussianBlur stdDeviation=".45"/></filter></defs>
<g filter="url(#b5)">
<path d="M3.1 9.7 L7.4 8.1 L7.8 60 L3.1 60 Z" fill="#93b868"/>
<path d="M7.4 8.1 L33 9.4 L33 60 L7.8 60 Z" fill="#a6c978"/>
<path d="M32.5 7.9 L36.3 6.7 L36.6 60 L32.5 60 Z" fill="#8fb464"/>
<path d="M36.3 6.7 L117.7 11.8 L117.7 60 L36.6 60 Z" fill="#a8ca7a"/>
<rect x="4.8" y="15" width="1.4" height="17" fill="#5a66a8" opacity=".6"/>
<rect x="5" y="36" width="1" height="16" fill="#6c7aa0" opacity=".5"/><rect x="34.2" y="36" width="1" height="18" fill="#6c7aa0" opacity=".5"/>
</g>
<text x="75.9" y="22.4" font-family="'Liberation Sans',sans-serif" font-weight="bold" font-size="10.5" fill="#5560aa" text-anchor="middle" textLength="67" lengthAdjust="spacingAndGlyphs">植 物 学</text>
<text x="12.3" y="21.6" font-family="'Liberation Sans',sans-serif" font-weight="bold" font-size="10.5" fill="#5560aa" textLength="20" lengthAdjust="spacingAndGlyphs">植</text>
<path d="M32.5 7.9 L36.3 6.7 L36.6 60 L32.5 60 Z" fill="#8fb464"/>
<rect x="33.9" y="14" width="1.4" height="18" fill="#5a66a8" opacity=".6"/>
<g filter="url(#b5)">
<g fill="#eef6e0" opacity=".22"><circle cx="14" cy="51" r="5"/><circle cx="20" cy="49" r="4.4"/><circle cx="18" cy="56" r="5"/><circle cx="42" cy="51" r="5"/><circle cx="48.5" cy="49" r="4.6"/><circle cx="47" cy="56" r="5.4"/></g><path d="M91 60 Q92 53 99 52.4 Q106 52 108 56 Q112 52.6 117.7 54" fill="none" stroke="#e4f0d4" stroke-width=".8" opacity=".7"/>
<rect x="63" y="25.6" width="9" height="2" fill="#5a66a8" opacity=".8"/><rect x="73.2" y="25.2" width=".4" height="2.8" fill="#5a66a8"/><rect x="75.6" y="26" width="15" height="1.8" fill="#5a66a8" opacity=".8"/>
<rect x="49" y="30.6" width="55" height="1.4" fill="#6672b0" opacity=".7"/>
</g>
</svg>
</div>
<div class="td" style="width:100px"><div class="cell">成果类别<br>5</div></div>
<div class="td" style="width:100px"><div class="cell">年度5</div></div>
<div class="td" style="width:100px"><div class="cell">无</div></div>
<div class="td" style="width:100px"><div class="cell">备注5</div></div>
<div class="td" style="width:100px"><div class="cell">2023-05<br>-15 14:2<br>3:54</div></div>
<div class="td" style="width:100px"><div class="cell">负责人账<br>号5</div></div>
<div class="td" style="width:100px"><div class="cell">负责人姓<br>名5</div></div>
<div class="td" style="width:100px"><div class="cell">学生学号<br>5</div></div>
<div class="td" style="width:100px"><div class="cell">学生姓名<br>5</div></div>
<div class="td" style="width:100px"><div class="cell">专业5</div></div>
<div class="td" style="width:100px"><div class="cell">班级5</div></div>
<div class="td" style="width:100px"><div class="cell">手机5</div></div>
<div class="td" style="width:100px"><div class="cell"></div></div>
<div class="td" style="width:100px"><div class="cell"><span class="pass">通过</span></div></div>
<div class="td" style="width:100px"><div class="cell"><span class="lnk">审核</span></div></div>
</div>
</div></div>
<div class="side"><div class="sthumb"></div>
<div class="mbtn" style="top:-24.8px"><div class="face">个人中心</div></div>
<div class="mbtn" style="top:69.0px"><div class="face dis">负责人管理</div></div>
<div class="mbtn" style="top:162.7px"><div class="face">游客管理</div></div>
<div class="mbtn" style="top:256.4px"><div class="face">学生管理</div></div>
<div class="mbtn" style="top:350.2px"><div class="face">评委管理</div></div>
<div class="mbtn" style="top:443.9px"><div class="face">专业管理</div></div>
<div class="mbtn" style="top:537.7px"><div class="face">班级管理</div></div>
<div class="mbtn" style="top:631.5px"><div class="face">竞赛类别管理</div></div>
<div class="mbtn" style="top:725.2px"><div class="face">竞赛信息管理</div></div>
<div class="mbtn" style="top:819.0px"><div class="face">竞赛报名管理</div></div>
<div class="mbtn" style="top:912.7px"><div class="face">成果详情管理</div></div>
<div class="active">成果详情</div>
<div class="mbtn" style="top:1071.0px"><div class="face">结果展示管理</div></div>
<div class="mbtn" style="top:1164.8px"><div class="face">系统管理</div></div>
</div>
</div></body></html>
